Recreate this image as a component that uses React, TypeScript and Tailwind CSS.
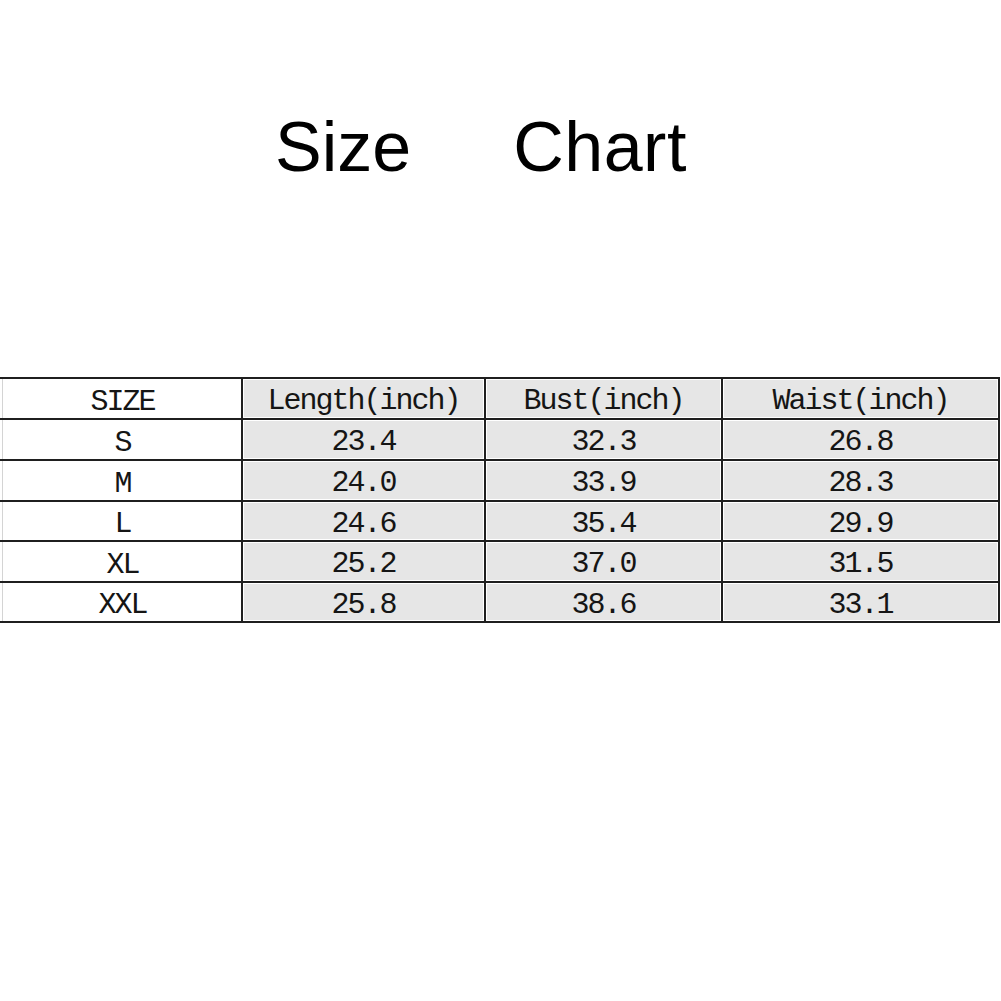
const rows = [
  { h: "h-[41px]", cells: ["SIZE", "Length(inch)", "Bust(inch)", "Waist(inch)"] },
  { h: "h-[41px]", cells: ["S", "23.4", "32.3", "26.8"] },
  { h: "h-[41px]", cells: ["M", "24.0", "33.9", "28.3"] },
  { h: "h-[40px]", cells: ["L", "24.6", "35.4", "29.9"] },
  { h: "h-[41px]", cells: ["XL", "25.2", "37.0", "31.5"] },
  { h: "h-[40px]", cells: ["XXL", "25.8", "38.6", "33.1"] },
];

export default function App() {
  return (
    <div className="w-[1001px] h-[1001px] bg-white overflow-hidden">
      {/* title */}
      <div
        className="pt-[112px] pl-[275px] flex gap-[102px] text-[70px] leading-none text-black"
        style={{ fontFamily: '"Liberation Sans", Arial, sans-serif' }}
      >
        <span>Size</span>
        <span className="tracking-[0.5px]">Chart</span>
      </div>

      {/* table */}
      <div
        className="mt-[195px] w-[1000px] border-t-2 border-[#1f1f1f] text-[30px] leading-none tracking-[-2px] text-[#151515]"
        style={{ fontFamily: '"Liberation Mono", "Courier New", monospace' }}
      >
        {rows.map((row, i) => (
          <div key={i} className={`grid grid-cols-[243px_243px_237px_277px] overflow-hidden ${row.h}`}>
            <div className="border-r-2 border-b-2 border-[#1f1f1f] bg-white pl-[2px]">
              <div className="h-full border-l border-[#d4d4d4] flex items-center justify-center pt-[6px] pl-[1px]">
                {row.cells[0]}
              </div>
            </div>
            {row.cells.slice(1).map((c, j) => (
              <div key={j} className="border-r-2 border-b-2 border-[#1f1f1f] bg-white p-px">
                <div className="h-full bg-[#e6e6e6] flex items-center justify-center pt-[5px]">{c}</div>
              </div>
            ))}
          </div>
        ))}
      </div>
    </div>
  );
}
